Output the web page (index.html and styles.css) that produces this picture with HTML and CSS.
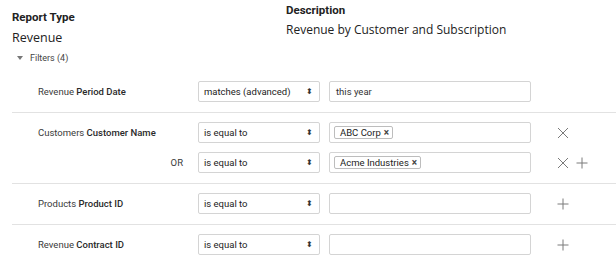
FILE: index.html
```html
<!DOCTYPE html>
<html>
<head>
<meta charset="utf-8">
<link rel="stylesheet" href="styles.css">
</head>
<body>
<div class="page">
  <div class="header">
    <div class="col left">
      <div class="h-title">Report Type</div>
      <div class="h-value">Revenue</div>
      <div class="filters-toggle"><span class="tri"></span>Filters (4)</div>
    </div>
    <div class="col right">
      <div class="h-title desc">Description</div>
      <div class="h-value desc-val">Revenue by Customer and Subscription</div>
    </div>
  </div>

  <div class="filters">
    <div class="frow">
      <div class="line">
        <div class="label">Revenue <b>Period Date</b></div>
        <div class="select">matches (advanced)<span class="arrows">⬍</span></div>
        <div class="input"><span class="txt">this year</span></div>
        <div class="actions"></div>
      </div>
    </div>

    <div class="frow">
      <div class="line">
        <div class="label">Customers <b>Customer Name</b></div>
        <div class="select">is equal to<span class="arrows">⬍</span></div>
        <div class="input"><span class="chip">ABC Corp <span class="cx">×</span></span></div>
        <div class="actions">
          <svg class="ico" width="12" height="12" viewBox="0 0 12 12"><path d="M1 1L11 11M11 1L1 11" stroke="#7a7a7a" stroke-width="1" fill="none"/></svg>
        </div>
      </div>
      <div class="line">
        <div class="label or">OR</div>
        <div class="select">is equal to<span class="arrows">⬍</span></div>
        <div class="input"><span class="chip">Acme Industries <span class="cx">×</span></span></div>
        <div class="actions">
          <svg class="ico" width="12" height="12" viewBox="0 0 12 12"><path d="M1 1L11 11M11 1L1 11" stroke="#7a7a7a" stroke-width="1" fill="none"/></svg>
          <svg class="ico" width="12" height="12" viewBox="0 0 12 12"><path d="M6 0.5V11.5M0.5 6H11.5" stroke="#7a7a7a" stroke-width="1" fill="none"/></svg>
        </div>
      </div>
    </div>

    <div class="frow">
      <div class="line">
        <div class="label">Products <b>Product ID</b></div>
        <div class="select">is equal to<span class="arrows">⬍</span></div>
        <div class="input"></div>
        <div class="actions">
          <svg class="ico" width="12" height="12" viewBox="0 0 12 12"><path d="M6 0.5V11.5M0.5 6H11.5" stroke="#7a7a7a" stroke-width="1" fill="none"/></svg>
        </div>
      </div>
    </div>

    <div class="frow">
      <div class="line">
        <div class="label">Revenue <b>Contract ID</b></div>
        <div class="select">is equal to<span class="arrows">⬍</span></div>
        <div class="input"></div>
        <div class="actions">
          <svg class="ico" width="12" height="12" viewBox="0 0 12 12"><path d="M6 0.5V11.5M0.5 6H11.5" stroke="#7a7a7a" stroke-width="1" fill="none"/></svg>
        </div>
      </div>
    </div>
  </div>
</div>
</body>
</html>
```

FILE: styles.css
```css
html, body {
  margin: 0;
  padding: 0;
  background: #fff;
}
body {
  font-family: Roboto, "Liberation Sans", sans-serif;
  color: #262626;
}
.page {
  width: 616px;
  height: 266px;
  overflow: hidden;
}
.header {
  display: grid;
  grid-template-columns: 274px 1fr;
  padding-left: 12px;
}
.col.left {
  padding-top: 9px;
}
.col.right {
  padding-top: 2px;
}
.h-title {
  font-weight: 700;
  font-size: 11.5px;
  line-height: 16px;
  color: #222;
}
.h-value {
  font-family: "Open Sans", sans-serif;
  font-size: 12.5px;
  line-height: 18px;
  margin-top: 4px;
  color: #222;
}
.desc-val {
  font-size: 12px;
  margin-top: 3px;
}
.filters-toggle {
  font-size: 9px;
  color: #444;
  margin-top: 5px;
  padding-left: 5px;
  display: flex;
  align-items: center;
  line-height: 12px;
}
.tri {
  width: 0;
  height: 0;
  border-left: 3px solid transparent;
  border-right: 3px solid transparent;
  border-top: 4px solid #777;
  margin-right: 7px;
}
.filters {
  margin-top: 8px;
  padding-left: 12px;
}
.frow {
  border-top: 1px solid #e2e2e2;
  padding: 9px 0 10px;
  display: flex;
  flex-direction: column;
  gap: 9px;
}
.frow:first-child {
  border-top: none;
}
.line {
  display: flex;
  align-items: center;
  height: 21px;
}
.label {
  width: 186px;
  flex: none;
  padding-left: 26px;
  box-sizing: border-box;
  font-size: 9.5px;
  color: #3a3a3a;
}
.label b {
  font-weight: 500;
  color: #2a2a2a;
}
.label.or {
  text-align: right;
  padding-right: 15px;
  padding-left: 0;
}
.select {
  width: 122px;
  flex: none;
  height: 21px;
  box-sizing: border-box;
  border: 1px solid #d4d4d4;
  border-radius: 2px;
  display: flex;
  align-items: center;
  justify-content: space-between;
  padding: 0 6px 0 5px;
  font-size: 9.5px;
  color: #222;
}
.arrows {
  font-size: 8px;
  color: #333;
}
.input {
  width: 202px;
  flex: none;
  height: 21px;
  margin-left: 9px;
  box-sizing: border-box;
  border: 1px solid #d4d4d4;
  border-radius: 2px;
  display: flex;
  align-items: center;
  padding: 0 4px;
  font-size: 9.5px;
  color: #333;
}
.input .txt {
  padding-left: 2px;
}
.chip {
  border: 1px solid #bdbdbd;
  border-radius: 2px;
  padding: 0 3px 0 5px;
  height: 13px;
  line-height: 12px;
  font-size: 9.5px;
  color: #222;
  box-sizing: border-box;
  display: inline-flex;
  align-items: center;
}
.cx {
  font-size: 10px;
  font-weight: 700;
  margin-left: 3px;
  color: #444;
}
.actions {
  margin-left: 26px;
  display: flex;
  gap: 7px;
  align-items: center;
}
.ico {
  display: block;
}
```
